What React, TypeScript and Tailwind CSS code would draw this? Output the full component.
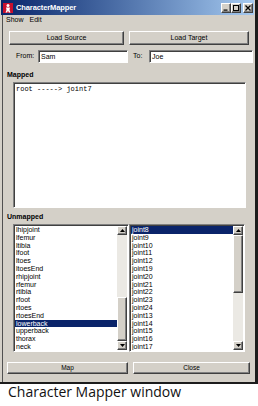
import React from "react";

const leftItems = ["lhipjoint", "lfemur", "ltibia", "lfoot", "ltoes", "ltoesEnd", "rhipjoint", "rfemur", "rtibia", "rfoot", "rtoes", "rtoesEnd", "lowerback", "upperback", "thorax", "neck", "head"];
const rightItems = ["joint8", "joint9", "joint10", "joint11", "joint12", "joint19", "joint20", "joint21", "joint22", "joint23", "joint24", "joint13", "joint14", "joint15", "joint16", "joint17", "joint18"];

const raised = "border border-t-white border-l-white border-r-[#404040] border-b-[#404040] shadow-[inset_-1px_-1px_0_#808080] bg-[#d4d0c8]";
const sunken = "border border-t-[#808080] border-l-[#808080] border-r-white border-b-white shadow-[inset_1px_1px_0_#404040] bg-white";

const Arrow = ({ down }: { down?: boolean }): React.JSX.Element => (
    <div className={`${raised} h-[9px] flex items-center justify-center`}>
        <svg width="5" height="3" viewBox="0 0 5 3">
            {down ? <polygon points="0,0 5,0 2.5,3" fill="#000" /> : <polygon points="0,3 5,3 2.5,0" fill="#000" />}
        </svg>
    </div>
);

const ListBox = ({ items, selected, left }: { items: string[]; selected: string; left?: boolean }): React.JSX.Element => (
    <div className={`${sunken} w-[116px] h-[128px] flex p-[1px]`}>
        <div className="flex-1 overflow-hidden">
            {items.map((it) => (
                <div
                    key={it}
                    className={`h-[7.8px] leading-[7.8px] text-[7px] pl-[1px] whitespace-nowrap ${it === selected ? "bg-[#0a246a] text-white" : "text-black"}`}
                >
                    {it}
                </div>
            ))}
        </div>
        <div className="w-[10px] flex flex-col bg-[#ebe9e4]">
            <Arrow />
            <div className="flex-1 flex flex-col">
                {left ? (
                    <>
                        <div className="h-[62px]" />
                        <div className={`${raised} h-[44px]`} />
                    </>
                ) : (
                    <>
                        <div className="h-[0px]" />
                        <div className={`${raised} h-[58px]`} />
                    </>
                )}
            </div>
            <Arrow down />
        </div>
    </div>
);

const TitleIcon = (): React.JSX.Element => (
    <svg width="10" height="10" viewBox="0 0 10 10">
        <rect width="10" height="10" fill="#c8102e" />
        <circle cx="5" cy="2.6" r="1.5" fill="#fff" />
        <path d="M3 4.5 L7 4.5 L6.5 7 L7.5 9.5 L5.8 9.5 L5 7.5 L4.2 9.5 L2.5 9.5 L3.5 7 Z" fill="#fff" />
    </svg>
);

const CaptionBtn = ({ kind }: { kind: "min" | "max" | "close" }): React.JSX.Element => (
    <div className={`${raised} w-[10px] h-[10px] flex items-center justify-center`}>
        <svg width="6" height="6" viewBox="0 0 6 6">
            {kind === "min" && <rect x="0.5" y="4.5" width="4" height="1.2" fill="#000" />}
            {kind === "max" && <rect x="0.5" y="0.5" width="5" height="5" fill="none" stroke="#000" strokeWidth="1" />}
            {kind === "close" && <path d="M0.5 0.5 L5.5 5.5 M5.5 0.5 L0.5 5.5" stroke="#000" strokeWidth="1.3" />}
        </svg>
    </div>
);

const App = (): React.JSX.Element => {
    return (
        <div className="w-[258px] h-[406px] bg-white font-['Liberation_Sans',Arial,sans-serif]">
            <div className="w-[258px] h-[384px] bg-[#d4d0c8] border-r-[3px] border-b-[2px] border-[#1c1c1c] shadow-[inset_2px_0_0_#d4d0c8,inset_3px_0_0_#505050] flex flex-col">
                {/* title bar */}
                <div className="h-[15px] mx-[1px] flex items-center bg-gradient-to-r from-[#0a246a] to-[#a6caf0] pl-[2px] pr-[1px]">
                    <TitleIcon />
                    <span className="ml-[3px] text-[7.5px] font-bold text-white tracking-[-0.1px]">CharacterMapper</span>
                    <div className="ml-auto flex items-center">
                        <CaptionBtn kind="min" />
                        <CaptionBtn kind="max" />
                        <div className="w-[2px]" />
                        <CaptionBtn kind="close" />
                    </div>
                </div>

                {/* menu */}
                <div className="h-[11px] flex items-center gap-[6px] pl-[6px] text-[7px] text-black">
                    <span>Show</span>
                    <span>Edit</span>
                </div>

                <div className="mt-[5px] h-[14px] flex pl-[9px] gap-[5px]">
                    <button className={`${raised} w-[115px] text-[7px] text-black`}>Load Source</button>
                    <button className={`${raised} w-[120px] text-[7px] text-black`}>Load Target</button>
                </div>

                <div className="mt-[5px] h-[13px] flex items-center text-[7px] text-black">
                    <span className="ml-[16px] w-[22px]">From:</span>
                    <div className={`${sunken} w-[90px] h-[13px] pl-[2px] leading-[11px]`}>Sam</div>
                    <span className="ml-[5px] w-[16px]">To:</span>
                    <div className={`${sunken} w-[104px] h-[13px] pl-[2px] leading-[11px]`}>Joe</div>
                </div>

                <div className="mt-[6px] h-[11px] leading-[11px] pl-[7px] text-[7px] font-bold text-black">Mapped</div>
                <div className={`${sunken} mt-[2px] ml-[13px] w-[233px] h-[126px] px-[2px] pt-[2px]`}>
                    <div className="font-['Liberation_Mono',monospace] text-[7px] leading-[8px] text-black whitespace-pre">root -----&gt; joint7</div>
                </div>

                <div className="mt-[3px] h-[11px] leading-[11px] pl-[7px] text-[7px] font-bold text-black">Unmapped</div>
                <div className="mt-[2px] ml-[13px] flex">
                    <ListBox items={leftItems} selected="lowerback" left />
                    <ListBox items={rightItems} selected="joint8" />
                </div>

                <div className="mt-[10px] h-[12px] flex pl-[7px] gap-[5px]">
                    <button className={`${raised} w-[121px] text-[6.5px] text-black`}>Map</button>
                    <button className={`${raised} w-[117px] text-[6.5px] text-black`}>Close</button>
                </div>
            </div>
            <div className="pl-[8px] text-[14px] leading-[16px] text-[#111] font-['Open_Sans',sans-serif]">Character Mapper window</div>
        </div>
    );
};

export default App;
